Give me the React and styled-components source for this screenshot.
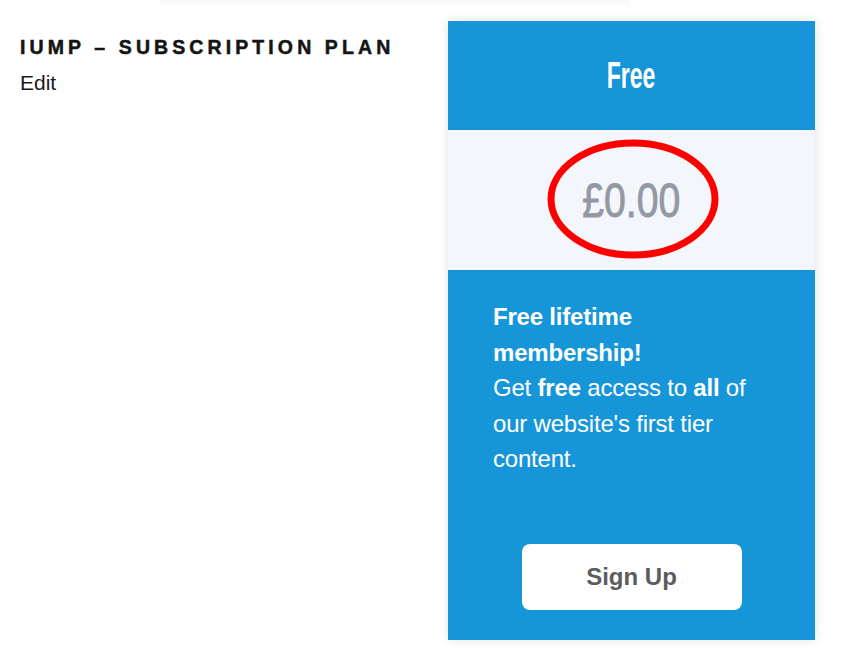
import React from 'react'
import styled, { createGlobalStyle } from 'styled-components'

const GlobalStyle = createGlobalStyle`
  html, body {
    margin: 0;
    padding: 0;
    background: #fff;
  }
  body {
    font-family: "Liberation Sans", Arial, sans-serif;
  }
`

const Page = styled.div`
  position: relative;
  display: flex;
  align-items: flex-start;
  padding: 21px 0 20px 20px;
  width: 850px;
  box-sizing: border-box;
`

const TopShade = styled.div`
  position: absolute;
  top: 0;
  left: 160px;
  width: 470px;
  height: 8px;
  background: linear-gradient(to bottom, rgba(0,0,0,0.03), rgba(0,0,0,0));
`

const Intro = styled.div`
  width: 428px;
  padding-top: 15px;
`

const Title = styled.h1`
  margin: 0;
  font-family: "Liberation Sans", Arial, sans-serif;
  font-weight: 700;
  font-size: 19.5px;
  line-height: 22px;
  letter-spacing: 4.1px;
  color: #141414;
  text-transform: uppercase;
  -webkit-text-stroke: 0.5px #141414;
`

const EditLink = styled.a`
  display: block;
  margin-top: 13px;
  font-size: 21px;
  color: #1a1a1a;
  text-decoration: none;
`

const Card = styled.div`
  width: 367px;
  display: flex;
  flex-direction: column;
  box-shadow: 0 0 10px rgba(0, 0, 0, 0.12);
`

const Header = styled.div`
  height: 109px;
  background: #1795d9;
  display: flex;
  align-items: center;
  justify-content: center;
`

const Condensed = styled.span`
  display: inline-block;
  font-family: "Liberation Sans", Arial, sans-serif;
  font-weight: ${p => p.$weight};
  font-size: ${p => p.$size}px;
  color: ${p => p.$color};
  -webkit-text-stroke: ${p => p.$stroke}px ${p => p.$color};
  transform: scaleX(${p => p.$squeeze});
  line-height: 1;
`

const PriceBand = styled.div`
  position: relative;
  height: 140px;
  background: #f3f6fb;
  display: flex;
  align-items: center;
  justify-content: center;
`

const Ring = styled.svg`
  position: absolute;
  left: 98px;
  top: 8px;
  overflow: visible;
`

const Body = styled.div`
  background: #1795d9;
  padding: 29px 45px 30px;
  display: flex;
  flex-direction: column;
  align-items: center;
  color: #fff;
`

const Description = styled.p`
  align-self: stretch;
  margin: 0;
  font-size: 24px;
  line-height: 35.5px;
  letter-spacing: -0.2px;
`

const Strong = styled.strong`
  font-weight: 700;
`

const SignUp = styled.button`
  margin-top: 67px;
  width: 220px;
  height: 66px;
  border: none;
  border-radius: 8px;
  background: #fff;
  color: #5c5c5c;
  font-family: "Liberation Sans", Arial, sans-serif;
  font-weight: 700;
  font-size: 24px;
  cursor: pointer;
`

export default function App() {
  return (
    <>
      <GlobalStyle />
      <Page>
        <TopShade />
        <Intro>
          <Title>IUMP – Subscription Plan</Title>
          <EditLink href="#">Edit</EditLink>
        </Intro>
        <Card>
          <Header>
            <Condensed $size={36} $weight={700} $stroke={0} $color="#fff" $squeeze={0.64}>Free</Condensed>
          </Header>
          <PriceBand>
            <Condensed $size={49} $weight={400} $stroke={0.9} $color="#9398a4" $squeeze={0.8}>£0.00</Condensed>
            <Ring width="174" height="122" viewBox="0 0 174 122">
              <ellipse cx="87" cy="61" rx="82" ry="56" fill="none" stroke="#ff0000" strokeWidth="7" />
            </Ring>
          </PriceBand>
          <Body>
            <Description>
              <Strong>Free lifetime membership!</Strong>
              <br />
              Get <Strong>free</Strong> access to <Strong>all</Strong> of our website's first tier content.
            </Description>
            <SignUp>Sign Up</SignUp>
          </Body>
        </Card>
      </Page>
    </>
  )
}
